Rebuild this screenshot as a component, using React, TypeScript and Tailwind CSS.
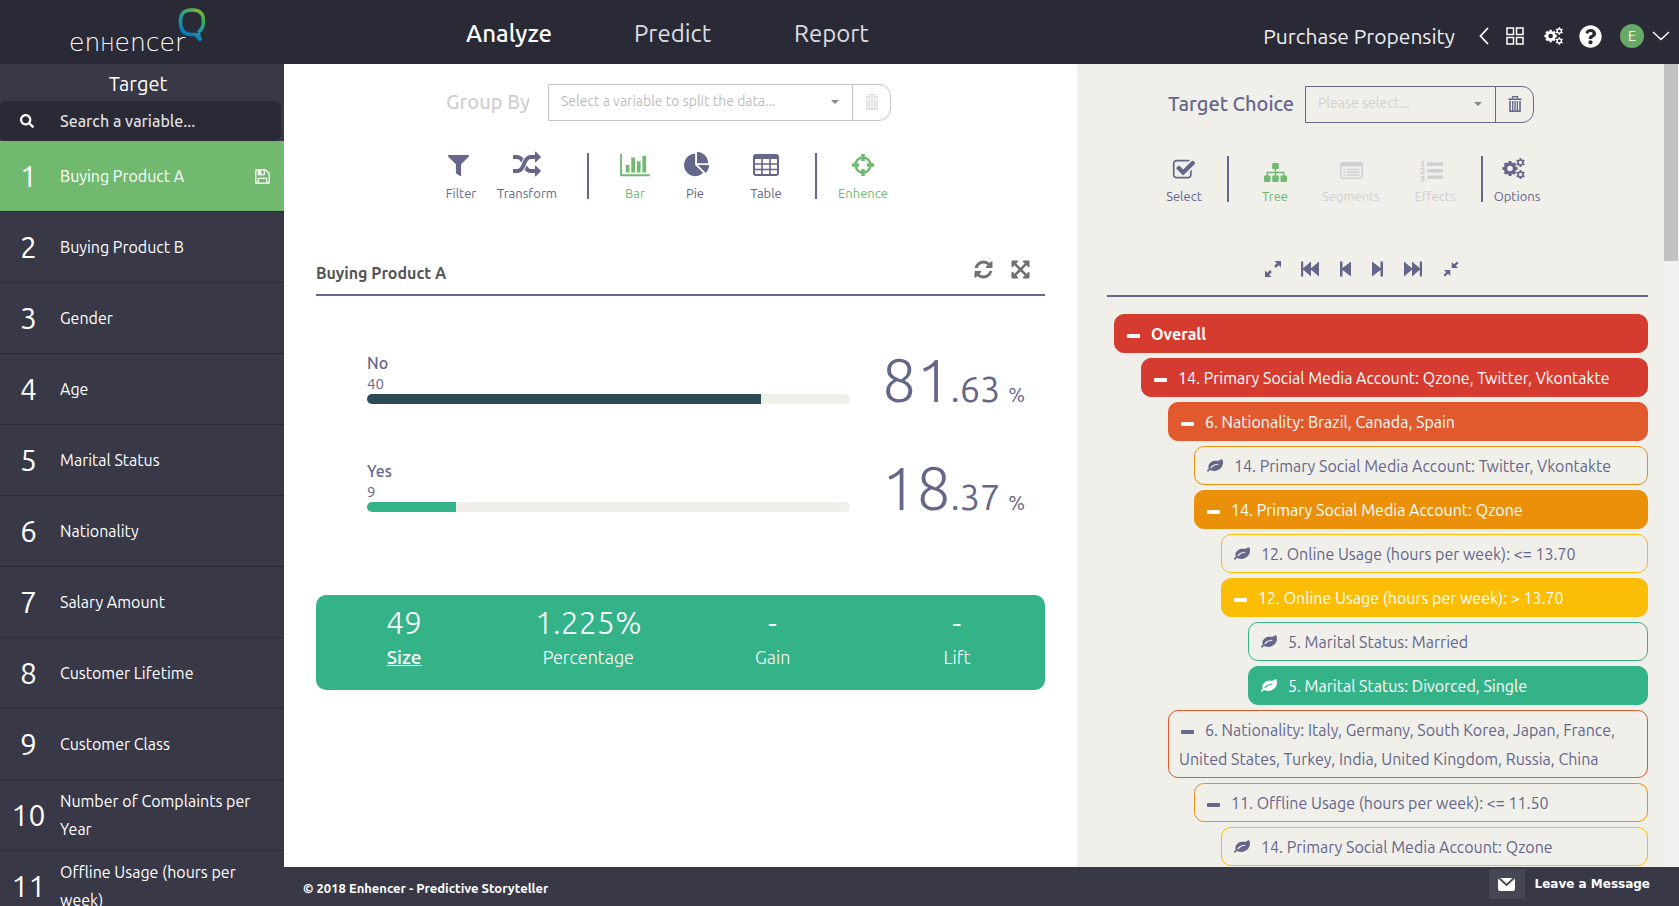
import React from "react";
import { FaFilter, FaQuestionCircle, FaSearch } from "react-icons/fa";

const P = {
  random:
    "M666 481q-60 92-137 273-22-45-37-72.5t-40.5-63.5-51-56.5-63-35-81.5-14.5h-224q-14 0-23-9t-9-23v-192q0-14 9-23t23-9h224q250 0 410 225zm1126 799q0 14-9 23l-320 320q-9 9-23 9-13 0-22.5-9.5t-9.5-22.5v-192q-32 0-85 .5t-81 1-73-1-71-5-64-10.5-63-18.5-58-28.5-59-40-55-53.5-56-69.5q59-93 136-273 22 45 37 72.5t40.5 63.5 51 56.5 63 35 81.5 14.5h256v-192q0-14 9-23t23-9q12 0 24 10l319 319q9 9 9 23zm0-896q0 14-9 23l-320 320q-9 9-23 9-13 0-22.5-9.5t-9.5-22.5v-192h-256q-48 0-87 15t-69 45-51 61.5-45 77.5q-32 62-78 171-29 66-49.5 111t-54 105-64 100-74 83-90 68.5-106.5 42-128 16.5h-224q-14 0-23-9t-9-23v-192q0-14 9-23t23-9h224q48 0 87-15t69-45 51-61.5 45-77.5q32-62 78-171 29-66 49.5-111t54-105 64-100 74-83 90-68.5 106.5-42 128-16.5h256v-192q0-14 9-23t23-9q12 0 24 10l319 319q9 9 9 23z",
  bar: "M640 896v512h-256v-512h256zm384-512v1024h-256v-1024h256zm1024 1152v128h-2048v-1536h128v1408h1920zm-640-896v768h-256v-768h256zm384-384v1152h-256v-1152h256z",
  pie: "M768 890l546 546q-106 108-247.5 168t-298.5 60q-209 0-385.5-103t-279.5-279.5-103-385.5 103-385.5 279.5-279.5 385.5-103v762zm187 6h773q0 157-60 298.5t-168 247.5zm709-128h-768v-768q209 0 385.5 103t279.5 279.5 103 385.5z",
  refresh:
    "M1639 1056q0 5-1 7-64 268-268 434.5t-478 166.5q-146 0-282.5-55t-243.5-157l-129 129q-19 19-45 19t-45-19-19-45v-448q0-26 19-45t45-19h448q26 0 45 19t19 45-19 45l-137 137q71 66 161 102t187 36q134 0 250-65t186-179q11-17 53-117 8-23 30-23h192q13 0 22.5 9.5t9.5 22.5zm25-800v448q0 26-19 45t-45 19h-448q-26 0-45-19t-19-45 19-45l138-138q-148-137-349-137-134 0-250 65t-186 179q-11 17-53 117-8 23-30 23h-199q-13 0-22.5-9.5t-9.5-22.5v-7q65-268 270-434.5t480-166.5q146 0 284 55.5t245 156.5l130-129q19-19 45-19t45 19 19 45z",
  arrows:
    "M1411 541l-355 355 355 355 144-144q29-31 70-14 39 17 39 59v448q0 26-19 45t-45 19h-448q-42 0-59-40-17-39 14-69l144-144-355-355-355 355 144 144q31 30 14 69-17 40-59 40h-448q-26 0-45-19t-19-45v-448q0-42 40-59 39-17 69 14l144 144 355-355-355-355-144 144q-19 19-45 19-12 0-24-5-40-17-40-59v-448q0-26 19-45t45-19h448q42 0 59 40 17 39-14 69l-144 144 355 355 355-355-144-144q-31-30-14-69 17-40 59-40h448q26 0 45 19t19 45v448q0 42-39 59-13 5-25 5-26 0-45-19z",
  leaf: "M1280 704q0-26-19-45t-45-19q-172 0-318 49.5t-259.5 134-235.5 219.5q-19 21-19 45 0 26 19 45t45 19q24 0 45-19 27-24 74-71t67-66q137-124 268.5-176t313.5-52q26 0 45-19t19-45zm512-198q0 95-20 193-46 224-184.5 383t-357.5 268q-214 108-438 108-148 0-286-47-15-5-88-42t-96-37q-16 0-39.5 32t-45 70-52.5 70-60 32q-43 0-63.5-17.5t-45.5-59.5q-2-4-6-11t-5.5-10-3-9.5-1.5-13.5q0-35 31-73.5t68-65.5 68-56 31-48q0-4-14-38t-16-44q-9-51-9-104 0-115 43.5-220t119-184.5 170.5-139 204-95.5q55-18 145-25.5t179.5-9 178.5-6 163.5-24 113.5-56.5l29.5-29.5 29.5-28 27-20 36.5-16 43.5-4.5q39 0 70.5 46t47.5 112 24 124 8 96z",
  save: "M512 1536h768v-384h-768v384zm896 0h128v-896q0-14-10-38.5t-20-34.5l-281-281q-10-10-34-20t-39-10v416q0 40-28 68t-68 28h-576q-40 0-68-28t-28-68v-416h-128v1280h128v-416q0-40 28-68t68-28h832q40 0 68 28t28 68v416zm-384-928v-320q0-13-9.5-22.5t-22.5-9.5h-192q-13 0-22.5 9.5t-9.5 22.5v320q0 13 9.5 22.5t22.5 9.5h192q13 0 22.5-9.5t9.5-22.5zm640 32v928q0 40-28 68t-68 28h-1344q-40 0-68-28t-28-68v-1344q0-40 28-68t68-28h928q40 0 88 20t76 48l280 280q28 28 48 76t20 88z",
  check:
    "M1472 930v318q0 119-84.5 203.5t-203.5 84.5h-832q-119 0-203.5-84.5t-84.5-203.5v-832q0-119 84.5-203.5t203.5-84.5h832q63 0 117 25 15 7 18 23 3 17-9 29l-49 49q-10 10-23 10-3 0-9-2-23-6-45-6h-832q-66 0-113 47t-47 113v832q0 66 47 113t113 47h832q66 0 113-47t47-113v-254q0-13 9-22l64-64q10-10 23-10 6 0 12 3 20 8 20 29zm231-489l-814 814q-24 24-57 24t-57-24l-430-430q-24-24-24-57t24-57l110-110q24-24 57-24t57 24l263 263 647-647q24-24 57-24t57 24l110 110q24 24 24 57t-24 57z",
};

function Glyph({ d, className, box = "0 0 1792 1792" }: { d: string; className: string; box?: string }) {
  return (
    <svg viewBox={box} fill="currentColor" className={className} aria-hidden="true">
      <path d={d} />
    </svg>
  );
}

const TableIcon = () => (
  <svg viewBox="0 0 26 22" className="h-[22px] w-[26px]" fill="none" stroke="currentColor" strokeWidth="2" aria-hidden="true">
    <rect x="1" y="1" width="24" height="20" rx="2" />
    <path d="M1 3h24" strokeWidth="4" />
    <path d="M1 10h24M1 15.500h24M9 3v18M17 3v18" strokeWidth="1.600" />
  </svg>
);

const TargetIcon = () => (
  <svg viewBox="0 0 24 24" className="size-6" fill="none" stroke="currentColor" aria-hidden="true">
    <circle cx="12" cy="12" r="7.500" strokeWidth="2.400" />
    <path d="M12 1v7M12 16v7M1 12h7M16 12h7" strokeWidth="3.600" />
  </svg>
);

const TreeIcon = () => (
  <svg viewBox="0 0 23 19" className="h-[19px] w-[23px]" fill="currentColor" aria-hidden="true">
    <rect x="8.200" y="0" width="6.600" height="6" rx="0.800" />
    <rect x="0" y="12.500" width="6.500" height="6.500" rx="0.800" />
    <rect x="8.250" y="12.500" width="6.500" height="6.500" rx="0.800" />
    <rect x="16.500" y="12.500" width="6.500" height="6.500" rx="0.800" />
    <path d="M11.500 5v8M3.300 13v-3.500h16.400V13" fill="none" stroke="currentColor" strokeWidth="1.500" />
  </svg>
);

const ListIcon = () => (
  <svg viewBox="0 0 23 17" className="h-[17px] w-[23px]" fill="none" stroke="currentColor" strokeWidth="1.500" aria-hidden="true">
    <rect x="0.800" y="0.800" width="21.400" height="15.400" rx="2" />
    <path d="M1 2.500h21" strokeWidth="4" />
    <path d="M3.500 7.500h1.500M3.500 10.300h1.500M3.500 13.100h1.500M6.500 7.500h13M6.500 10.300h13M6.500 13.100h13" strokeWidth="1.500" />
  </svg>
);

const NumberedIcon = () => (
  <svg viewBox="0 0 23 23" className="mr-2 size-[23px]" fill="currentColor" aria-hidden="true">
    <path d="M7 3.500h16v3.600H7zM7 10h16v3.600H7zM7 16.500h16v3.600H7z" />
    <g fontSize="9" fontWeight="700" stroke="currentColor" strokeWidth="0.300">
      <text x="0" y="7.500">1</text>
      <text x="0" y="15">2</text>
      <text x="0" y="22.500">3</text>
    </g>
  </svg>
);

const GearsIcon = ({ className }: { className: string }) => (
  <svg viewBox="0 0 23 21" className={className} fill="none" stroke="currentColor" aria-hidden="true">
    <circle cx="8" cy="10.500" r="4.500" strokeWidth="3.400" />
    <path d="M8 3v3M8 15v3M.5 10.500h3M12.500 10.500h3M2.700 5.200l2.200 2.200M11.100 13.600l2.200 2.200M2.700 15.800l2.200-2.200M11.100 7.400l2.200-2.200" strokeWidth="2.900" />
    <circle cx="18.500" cy="4.500" r="2.500" strokeWidth="1.700" />
    <path d="M18.500 0v2M18.500 7v2M14.600 2.200l1.800 1.100M20.600 5.700l1.800 1.100M14.600 6.800l1.800-1.100M20.600 3.300l1.800-1.100" strokeWidth="1.900" />
    <circle cx="18.500" cy="16.500" r="2.500" strokeWidth="1.700" />
    <path d="M18.500 12v2M18.500 19v2M14.600 14.200l1.800 1.100M20.600 17.700l1.800 1.100M14.600 18.800l1.800-1.100M20.600 15.300l1.800-1.100" strokeWidth="1.900" />
  </svg>
);

const TrashIcon = () => (
  <svg viewBox="0 0 14 16" className="h-4 w-[14px]" fill="none" stroke="currentColor" aria-hidden="true">
    <path d="M4.500 2.500V.7h5v1.800" strokeWidth="1.300" />
    <path d="M.5 3.200h13" strokeWidth="1.600" />
    <path d="M2 5v10.300h10V5" strokeWidth="1.600" />
    <path d="M4.700 5v10M7 5v10M9.300 5v10" strokeWidth="1.300" />
  </svg>
);

type Tool = { label: string; icon: React.ReactNode; className: string };

function ToolButton({ label, icon, className }: Tool) {
  return (
    <button type="button" className={`flex shrink-0 flex-col items-center text-[13px] leading-5 ${className}`}>
      <span className="mb-1 flex h-7 items-center">{icon}</span>
      {label}
    </button>
  );
}

const Divider = ({ className }: { className: string }) => <span className={`h-[46px] w-0.5 shrink-0 bg-[#65678a] ${className}`} />;

type PickerProps = { id: string; label: string; placeholder: string; labelClass: string; boxClass: string; lineClass: string; trashClass: string };

function Picker({ id, label, placeholder, labelClass, boxClass, lineClass, trashClass }: PickerProps) {
  return (
    <div className="flex items-center">
      <label htmlFor={id} className={`shrink-0 pb-0.5 text-xl font-medium leading-7 ${labelClass}`}>
        {label}
      </label>
      <div className={`flex h-[37px] rounded-r-xl border ${lineClass}`}>
        <div className={`relative ${boxClass}`}>
          <select id={id} className="h-full w-full appearance-none bg-transparent pb-1 pl-3 pr-8 text-sm outline-none">
            <option>{placeholder}</option>
          </select>
          <span className="pointer-events-none absolute right-[13px] top-[15px] border-x-4 border-t-4 border-x-transparent border-t-[#888]" />
        </div>
        <button type="button" aria-label={`Clear ${label}`} className={`flex w-[38px] items-center justify-center border-l pb-0.5 ${lineClass} ${trashClass}`}>
          <TrashIcon />
        </button>
      </div>
    </div>
  );
}

const variables = [
  "Buying Product A",
  "Buying Product B",
  "Gender",
  "Age",
  "Marital Status",
  "Nationality",
  "Salary Amount",
  "Customer Lifetime",
  "Customer Class",
  "Number of Complaints per Year",
  "Offline Usage (hours per week)",
];

function Logo() {
  return (
    <a href="#home" aria-label="Enhencer" className="flex w-[284px] shrink-0 pl-[69px] text-white">
      <span className="pt-[27px] font-['DejaVu_Sans'] text-[25px] font-extralight leading-8">
        en<span className="text-[19px]">H</span>encer
      </span>
      <svg viewBox="0 0 28 36" className="-ml-[7px] mt-[7px] h-9 w-7 shrink-0" fill="none" aria-hidden="true">
        <defs>
          <linearGradient id="bubble" x1="0.2" y1="1" x2="0.7" y2="0">
            <stop offset="0.1" stopColor="#0b72c4" />
            <stop offset="0.55" stopColor="#1f9c9a" />
            <stop offset="0.85" stopColor="#3daf58" />
            <stop offset="1" stopColor="#72b83c" />
          </linearGradient>
        </defs>
        <path
          d="M20 25.500C24 23 25.500 19.500 25.500 14.500C25.500 6.500 22 3 14 3S2.500 6.500 2.500 15C2.500 23.500 6.500 27.500 13 27.500H17.500L22 32.500L20 25.500"
          stroke="url(#bubble)"
          strokeWidth="3.600"
          strokeLinejoin="round"
        />
      </svg>
    </a>
  );
}

function Header() {
  return (
    <header className="flex h-16 shrink-0 bg-[#2a2a36] text-white">
      <Logo />
      <nav className="flex flex-1 items-center pl-[182px] pt-1 text-2xl leading-8 text-[#dddde0]">
        <a href="#analyze" className="w-[168px] font-medium text-white">Analyze</a>
        <a href="#predict" className="w-[160px]">Predict</a>
        <a href="#report">Report</a>
      </nav>
      <div className="flex items-center pr-[9px] pt-2">
        <span className="mr-6 text-[21px] leading-7 text-[#eeeef0]">Purchase Propensity</span>
        <button type="button" aria-label="Back" className="mr-[17px]">
          <svg viewBox="0 0 10 18" className="h-[18px] w-[10px]" fill="none" stroke="currentColor" strokeWidth="1.800"><path d="M9 1L1.500 9L9 17" /></svg>
        </button>
        <button type="button" aria-label="Dashboard" className="mr-5">
          <svg viewBox="0 0 18 18" className="size-[18px]" fill="none" stroke="currentColor" strokeWidth="1.500"><path d="M1 1h6.500v6.500H1zM10.500 1H17v6.500h-6.500zM1 10.500h6.500V17H1zM10.500 10.500H17V17h-6.500z" /></svg>
        </button>
        <button type="button" aria-label="Settings" className="mr-4"><GearsIcon className="h-[18px] w-[19px]" /></button>
        <button type="button" aria-label="Help" className="mr-[18px]"><FaQuestionCircle className="size-[23px]" /></button>
        <button type="button" className="mr-2 flex size-6 items-center justify-center rounded-full bg-[#66aa66] text-sm">E</button>
        <button type="button" aria-label="Account menu">
          <svg viewBox="0 0 18 10" className="h-[10px] w-[18px]" fill="none" stroke="currentColor" strokeWidth="1.500"><path d="M1 1L9 8.500L17 1" /></svg>
        </button>
      </div>
    </header>
  );
}

function Sidebar() {
  return (
    <aside className="w-[284px] shrink-0 overflow-hidden bg-[#383847] text-white">
      <h2 className="pb-0.5 pr-2 pt-1 text-center text-xl leading-[31px]">Target</h2>
      <div className="mr-[3px] flex h-10 items-center rounded-md bg-[#2a2a36] pl-5">
        <label htmlFor="search" aria-label="Search" className="w-10"><FaSearch className="size-[14px]" /></label>
        <input id="search" placeholder="Search a variable..." className="w-[200px] bg-transparent text-base font-medium outline-none placeholder:text-[#dedede]" />
      </div>
      <ol>
        {variables.map((name, i) => (
          <li key={name} className={i === 0 ? "border-b border-[#2a2a36] bg-[#70b96f]" : "border-b border-[#2a2a36]"}>
            <button type="button" className="flex h-[70px] w-full items-center text-left">
              <span className="w-[57px] shrink-0 text-center text-3xl">{i + 1}</span>
              <span className="ml-[3px] flex-1 pr-5 text-base leading-7">{name}</span>
              {i === 0 && <Glyph d={P.save} className="mr-[13px] size-[17px]" />}
            </button>
          </li>
        ))}
      </ol>
    </aside>
  );
}

const results = [
  { name: "No", count: 40, whole: "81", part: ".63", percent: 81.63, fill: "bg-[#2d4b55]" },
  { name: "Yes", count: 9, whole: "18", part: ".37", percent: 18.37, fill: "bg-[#35b388]" },
];

const stats = [
  ["1.225%", "Percentage"],
  ["-", "Gain"],
  ["-", "Lift"],
];

function Analysis() {
  return (
    <main className="min-w-0 flex-[793] bg-white text-[#65678a]">
      <div className="pl-[162px] pt-5">
        <Picker id="group" label="Group By" placeholder="Select a variable to split the data..." labelClass="w-[102px] text-[#cfcfd2]" boxClass="w-[303px] text-[#bcbcc0]" lineClass="border-[#c4c4c8]" trashClass="text-[#dcdcdc]" />
      </div>
      <div className="mt-[30px] flex pl-[145px]">
        <ToolButton label="Filter" className="w-16" icon={<FaFilter className="mr-1.5 size-[21px]" />} />
        <ToolButton label="Transform" className="w-[68px]" icon={<Glyph d={P.random} className="size-7" />} />
        <Divider className="ml-[26px] mt-0.5" />
        <ToolButton label="Bar" className="ml-4 w-[60px] text-[#70b96f]" icon={<Glyph d={P.bar} box="0 0 2048 1792" className="h-[26px] w-[30px]" />} />
        <ToolButton label="Pie" className="w-[60px]" icon={<Glyph d={P.pie} className="ml-1 size-[26px]" />} />
        <ToolButton label="Table" className="w-[82px]" icon={<TableIcon />} />
        <Divider className="ml-2 mt-0.5" />
        <ToolButton label="Enhence" className="ml-1.5 w-20 text-[#70b96f]" icon={<TargetIcon />} />
      </div>
      <section className="px-8 pt-[50px]">
        <div className="flex h-[43px] items-start border-b-2 border-[#65678a]">
          <h1 className="flex-1 pt-2 text-base font-bold leading-6 text-[#555]">Buying Product A</h1>
          <button type="button" aria-label="Refresh" className="mr-4 mt-1.5 text-[#707070]"><Glyph d={P.refresh} className="size-[21px]" /></button>
          <button type="button" aria-label="Full screen" className="mr-3.5 mt-1.5 text-[#707070]"><Glyph d={P.arrows} className="size-[21px]" /></button>
        </div>
        <div className="pt-[52px]">
          {results.map((r) => (
            <div key={r.name} className="flex h-[108px] pl-[51px]">
              <div className="flex-1 pt-1">
                <div className="text-base font-medium leading-[22px]">{r.name}</div>
                <div className="text-[15px] leading-5">{r.count}</div>
                <div className="h-2.5 overflow-hidden rounded-full bg-[#f0efea]">
                  <div className={`h-full ${r.fill}`} style={{ width: `${r.percent}%` }} />
                </div>
              </div>
              <div className="w-[195px] shrink-0 whitespace-nowrap pl-8 pt-0.5 font-light leading-[60px]">
                <span className="text-[61px]">{r.whole}</span>
                <span className="text-[36px] font-normal">{r.part}</span>
                <span className="ml-2 text-xl font-normal">%</span>
              </div>
            </div>
          ))}
        </div>
        <div className="mt-[31px] h-[95px] rounded-[10px] bg-[#35b388] pt-[7px] text-center text-white">
          <div className="-mx-1 grid grid-cols-4">
            <div>
              <div className="text-[32px] font-light leading-10">49</div>
              <a href="#size" className="text-[19px] font-medium leading-[30px] underline">Size</a>
            </div>
            {stats.map(([value, label]) => (
              <div key={label}>
                <div className="text-[32px] font-light leading-10">{value}</div>
                <div className="text-lg font-light leading-[30px]">{label}</div>
              </div>
            ))}
          </div>
        </div>
      </section>
    </main>
  );
}

type Node = { text: string; indent: string; tone: string; leaf?: boolean; bold?: boolean };

const nodes: Node[] = [
  { text: "Overall", indent: "ml-0", tone: "border-[#d63b2f] bg-[#d63b2f] text-white", bold: true },
  { text: "14. Primary Social Media Account: Qzone, Twitter, Vkontakte", indent: "ml-[27px]", tone: "border-[#d63b2f] bg-[#d63b2f] text-white" },
  { text: "6. Nationality: Brazil, Canada, Spain", indent: "ml-[54px]", tone: "border-[#e05a2d] bg-[#e05a2d] text-white" },
  { text: "14. Primary Social Media Account: Twitter, Vkontakte", indent: "ml-20", tone: "border-[#ea900a]", leaf: true },
  { text: "14. Primary Social Media Account: Qzone", indent: "ml-20", tone: "border-[#ea900a] bg-[#ea900a] text-white" },
  { text: "12. Online Usage (hours per week): <= 13.70", indent: "ml-[107px]", tone: "border-[#fbbd05]", leaf: true },
  { text: "12. Online Usage (hours per week): > 13.70", indent: "ml-[107px]", tone: "border-[#fbbd05] bg-[#fbbd05] text-white" },
  { text: "5. Marital Status: Married", indent: "ml-[134px]", tone: "border-[#35b388]", leaf: true },
  { text: "5. Marital Status: Divorced, Single", indent: "ml-[134px]", tone: "border-[#35b388] bg-[#35b388] text-white", leaf: true },
  { text: "6. Nationality: Italy, Germany, South Korea, Japan, France, United States, Turkey, India, United Kingdom, Russia, China", indent: "ml-[54px]", tone: "border-[#e05a2d]" },
  { text: "11. Offline Usage (hours per week): <= 11.50", indent: "ml-20", tone: "border-[#ea900a]" },
  { text: "14. Primary Social Media Account: Qzone", indent: "ml-[107px]", tone: "border-[#fbbd05]", leaf: true },
];

const controls = [
  { label: "Expand all", box: "0 0 16 16", size: "w-4", gap: "mr-5", d: "M9.500 0H16V6.500L13.700 4.200L11 6.900L9.100 5L11.800 2.300zM0 9.500L2.300 11.800L5 9.100L6.900 11L4.200 13.700L6.500 16H0z" },
  { label: "First", box: "0 0 18 16", size: "w-[18px]", gap: "mr-[21px]", d: "M0 .5h2.200v6.700L10 .5v6.700L18 .5v15L10 8.800v6.700L2.200 8.800v6.700H0z" },
  { label: "Previous", box: "0 0 11 16", size: "w-[11px]", gap: "mr-[21px]", d: "M0 .5h2.500v6.500L11 .5v15L2.500 9v6.500H0z" },
  { label: "Next", box: "0 0 11 16", size: "w-[11px]", gap: "mr-[21px]", d: "M11 .5H8.500v6.500L0 .5v15L8.500 9v6.500H11z" },
  { label: "Last", box: "0 0 18 16", size: "w-[18px]", gap: "mr-[21px]", d: "M18 .5h-2.200v6.700L8 .5v6.700L0 .5v15l8-6.700v6.700l7.800-6.700v6.700H18z" },
  { label: "Collapse all", box: "0 0 16 16", size: "w-4", gap: "", d: "M14 .5L15.500 2L12.800 4.700L15 7H8.700V1L11 3.200zM1 9h6.300v6L5 12.800L2 15.500L.5 14L3.200 11.300z" },
];

function TargetPanel() {
  return (
    <section className="flex min-w-0 flex-[602] bg-[#f0efea] text-[#65678a]">
      <div className="min-w-0 flex-1 overflow-hidden pl-[30px] pr-4">
        <div className="pl-[61px] pt-[22px]">
          <Picker id="target" label="Target Choice" placeholder="Please select..." labelClass="w-[137px]" boxClass="w-[189px] text-[#d0d0d2]" lineClass="border-[#65678a]" trashClass="" />
        </div>
        <div className="mt-[31px] flex pl-[46px]">
          <ToolButton label="Select" className="w-[62px]" icon={<Glyph d={P.check} className="mt-1 size-6" />} />
          <Divider className="ml-3 mt-0.5" />
          <ToolButton label="Tree" className="ml-4 w-[60px] text-[#70b96f]" icon={<span className="mt-2"><TreeIcon /></span>} />
          <ToolButton label="Segments" className="w-[92px] text-[#d0d0d2]" icon={<span className="mt-1"><ListIcon /></span>} />
          <ToolButton label="Effects" className="w-[76px] text-[#d0d0d2]" icon={<span className="mt-1"><NumberedIcon /></span>} />
          <Divider className="ml-2 mt-0.5" />
          <ToolButton label="Options" className="w-[68px]" icon={<GearsIcon className="mr-2 h-[21px] w-[23px]" />} />
        </div>
        <div className="mt-[55px] flex h-9 items-start border-b-2 border-[#65678a] pl-[158px]">
          {controls.map((c) => (
            <button key={c.label} type="button" aria-label={c.label} className={c.gap}>
              <Glyph d={c.d} box={c.box} className={`h-4 ${c.size}`} />
            </button>
          ))}
        </div>
        <ul className="flex flex-col gap-[5px] pl-[7px] pt-[17px]">
          {nodes.map((n, i) => (
            <li key={i} className={`rounded-[10px] border pb-[3px] pl-2.5 pr-4 pt-[5px] text-base leading-[29px] ${n.indent} ${n.tone}`}>
              {n.leaf ? (
                <Glyph d={P.leaf} className="mb-1 ml-0.5 mr-[11px] inline size-4" />
              ) : (
                <span className="ml-0.5 mr-[11px] inline-block h-1 w-[13px] rounded-[1px] bg-current align-middle" />
              )}
              <span className={n.bold ? "font-bold" : ""}>{n.text}</span>
            </li>
          ))}
        </ul>
      </div>
      <div className="w-[15px] shrink-0 bg-[#f1f1f1] pr-px">
        <div className="h-[197px] bg-[#c1c1c1]" />
      </div>
    </section>
  );
}

function Footer() {
  return (
    <footer className="flex h-[39px] shrink-0 items-start bg-[#383847] pl-[19px] pr-[29px] text-white">
      <span className="flex-1 pt-[11px] text-[13px] font-bold leading-5">© 2018 Enhencer - Predictive Storyteller</span>
      <button type="button" className="mt-0.5 flex items-center gap-2.5 font-['DejaVu_Sans'] text-xs font-bold">
        <span className="flex h-[30px] w-9 items-center justify-center rounded-tl bg-[#464655]">
          <svg viewBox="0 0 17 13" className="h-[13px] w-[17px]" aria-hidden="true">
            <rect width="17" height="13" rx="2" fill="currentColor" />
            <path d="M1 0L8.500 7L16 0" fill="none" stroke="#464655" strokeWidth="1.800" />
          </svg>
        </span>
        Leave a Message
      </button>
    </footer>
  );
}

export default function App() {
  return (
    <div className="flex h-screen flex-col overflow-hidden font-['Ubuntu','Noto_Sans',sans-serif]">
      <Header />
      <div className="flex min-h-0 flex-1">
        <Sidebar />
        <div className="flex min-w-0 flex-1 flex-col">
          <div className="flex min-h-0 flex-1">
            <Analysis />
            <TargetPanel />
          </div>
          <Footer />
        </div>
      </div>
    </div>
  );
}
